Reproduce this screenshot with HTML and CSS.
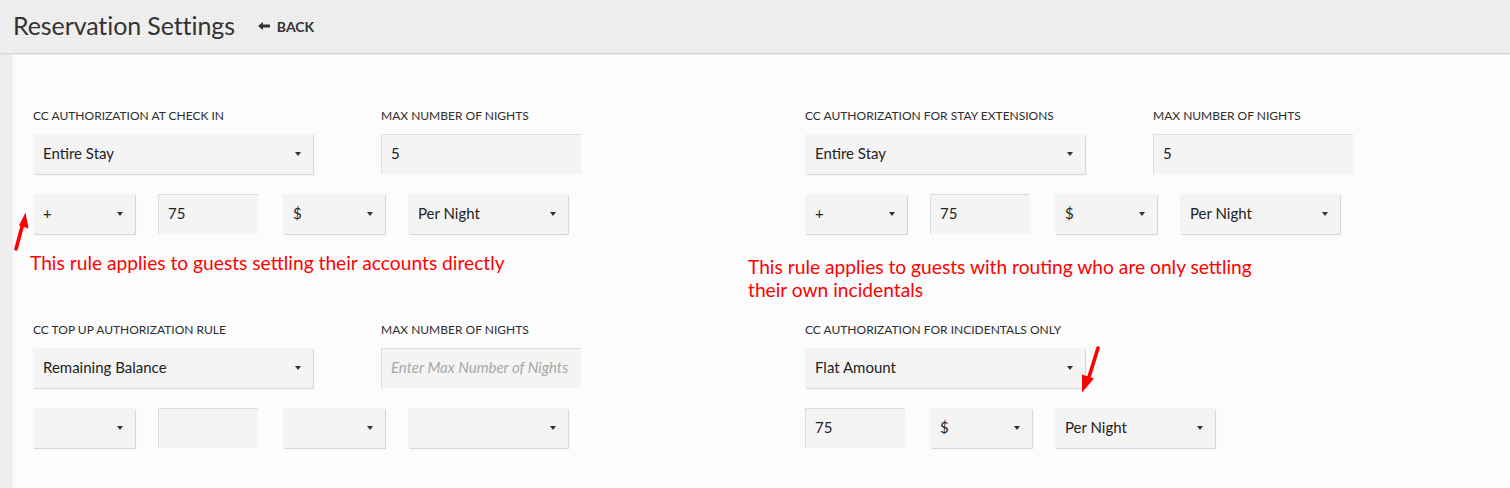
FILE: index.html
```html
<!DOCTYPE html>
<html>
<head>
<meta charset="utf-8">
<title>Reservation Settings</title>
<link rel="stylesheet" href="styles.css">
</head>
<body>
<header class="topbar">
  <h1 class="title">Reservation Settings</h1>
  <a class="back" href="#">
    <svg class="back-icon" width="12" height="10" viewBox="0 0 12 10"><path d="M0 5 L5 1 L5 3.6 L12 3.6 L12 6.4 L5 6.4 L5 9 Z" fill="#333"/></svg>
    BACK
  </a>
</header>
<div class="page">
  <div class="gutter"></div>
  <main class="panel">
    <div class="grid">
      <section class="group">
        <div class="line1">
          <div class="field main">
            <label class="lbl">CC AUTHORIZATION AT CHECK IN</label>
            <div class="ctl select w280">Entire Stay<span class="caret"></span></div>
          </div>
          <div class="field">
            <label class="lbl">MAX NUMBER OF NIGHTS</label>
            <div class="ctl input w200">5</div>
          </div>
        </div>
        <div class="line2">
          <div class="ctl select w102">+<span class="caret"></span></div>
          <div class="ctl input w100">75</div>
          <div class="ctl select w102">$<span class="caret"></span></div>
          <div class="ctl select w160">Per Night<span class="caret"></span></div>
        </div>
      </section>
      <section class="group">
        <div class="line1">
          <div class="field main">
            <label class="lbl">CC AUTHORIZATION FOR STAY EXTENSIONS</label>
            <div class="ctl select w280">Entire Stay<span class="caret"></span></div>
          </div>
          <div class="field">
            <label class="lbl">MAX NUMBER OF NIGHTS</label>
            <div class="ctl input w200">5</div>
          </div>
        </div>
        <div class="line2">
          <div class="ctl select w102">+<span class="caret"></span></div>
          <div class="ctl input w100">75</div>
          <div class="ctl select w102">$<span class="caret"></span></div>
          <div class="ctl select w160">Per Night<span class="caret"></span></div>
        </div>
      </section>

      <p class="note note-left">This rule applies to guests settling their accounts directly</p>
      <p class="note note-right">This rule applies to guests with routing who are only settling their own incidentals</p>

      <section class="group">
        <div class="line1">
          <div class="field main">
            <label class="lbl">CC TOP UP AUTHORIZATION RULE</label>
            <div class="ctl select w280">Remaining Balance<span class="caret"></span></div>
          </div>
          <div class="field">
            <label class="lbl">MAX NUMBER OF NIGHTS</label>
            <div class="ctl input w200 placeholder">Enter Max Number of Nights</div>
          </div>
        </div>
        <div class="line2">
          <div class="ctl select w102"><span class="caret"></span></div>
          <div class="ctl input w100"></div>
          <div class="ctl select w102"><span class="caret"></span></div>
          <div class="ctl select w160"><span class="caret"></span></div>
        </div>
      </section>
      <section class="group">
        <div class="line1">
          <div class="field main">
            <label class="lbl">CC AUTHORIZATION FOR INCIDENTALS ONLY</label>
            <div class="ctl select w280">Flat Amount<span class="caret"></span></div>
          </div>
        </div>
        <div class="line2">
          <div class="ctl input w100">75</div>
          <div class="ctl select w102">$<span class="caret"></span></div>
          <div class="ctl select w160">Per Night<span class="caret"></span></div>
        </div>
      </section>
    </div>
  </main>

  <svg class="anno anno-left" width="20" height="42" viewBox="0 0 20 42">
    <path d="M4 38 L10.5 14" stroke="#f00" stroke-width="3.6" stroke-linecap="round" fill="none"/>
    <path d="M13.5 1.5 L16.5 17.5 L7 14.5 Z" fill="#f00"/>
  </svg>
  <svg class="anno anno-right" width="24" height="50" viewBox="0 0 24 50">
    <path d="M19 3 L10 32" stroke="#f00" stroke-width="3.6" stroke-linecap="round" fill="none"/>
    <path d="M3 47.5 L3 29.5 L15 33.5 Z" fill="#f00"/>
  </svg>
</div>
</body>
</html>
```

FILE: styles.css
```css
html, body {
  margin: 0;
  padding: 0;
}
body {
  width: 1510px;
  height: 488px;
  overflow: hidden;
  font-family: "Lato", "Liberation Sans", sans-serif;
  color: #333;
  background-color: #efefef;
  background-image: radial-gradient(#e4e4e4 0.7px, transparent 0.9px);
  background-size: 3px 3px;
}
.topbar {
  height: 54px;
  border-bottom: 1px solid #d6d6d6;
  box-shadow: 0 1px 0 #e8e8e8;
  display: flex;
  align-items: center;
  padding-left: 13px;
  padding-bottom: 3px;
  box-sizing: border-box;
}
.title {
  margin: 0;
  font-weight: 400;
  font-size: 25px;
  color: #333;
  letter-spacing: -0.1px;
}
.back {
  display: flex;
  align-items: center;
  gap: 7px;
  margin-left: 23px;
  margin-top: 2px;
  font-size: 14px;
  font-weight: 700;
  color: #333;
  text-decoration: none;
}
.page {
  position: relative;
  display: flex;
  height: 433px;
  margin-top: 1px;
}
.gutter {
  width: 13px;
  flex: none;
}
.panel {
  flex: 1;
  background: #fcfcfc;
  padding: 53px 20px 0 20px;
}
.grid {
  display: grid;
  grid-template-columns: 772px 1fr;
  grid-template-rows: auto 88px auto;
}
.field {
  display: flex;
  flex-direction: column;
}
.lbl {
  display: block;
  font-size: 12px;
  line-height: 16px;
  height: 16px;
  margin-bottom: 10px;
  color: #2e2e2e;
  text-transform: uppercase;
  white-space: nowrap;
}
.line1 {
  display: flex;
  gap: 68px;
}
.line2 {
  display: grid;
  grid-template-columns: repeat(4, 125px);
  margin-top: 20px;
}
.ctl {
  position: relative;
  height: 40px;
  box-sizing: border-box;
  background: #f4f4f4;
  font-size: 15px;
  line-height: 39px;
  color: #222;
  padding-left: 10px;
  white-space: nowrap;
  overflow: hidden;
}
.select {
  box-shadow: 1px 1px 1px #d2d2d2;
  border-radius: 1px;
}
.input {
  box-shadow: inset 1px 1px 0 #dedede;
}
.placeholder {
  color: #a8a8a8;
  font-style: italic;
}
.w280 { width: 280px; }
.w200 { width: 200px; }
.w160 { width: 160px; }
.w102 { width: 102px; }
.w100 { width: 100px; }
.caret {
  position: absolute;
  right: 12px;
  top: 18px;
  width: 0;
  height: 0;
  border-left: 3.5px solid transparent;
  border-right: 3.5px solid transparent;
  border-top: 4px solid #333;
}
.note {
  margin: 0;
  font-family: "Lato", "Liberation Sans", sans-serif;
  font-size: 19.2px;
  line-height: 23px;
  color: #f00;
}
.note-left {
  margin-top: 17px;
  margin-left: -3px;
}
.note-right {
  margin-top: 21px;
  margin-left: -57px;
  max-width: 515px;
}
.anno {
  position: absolute;
}
.anno-left {
  left: 12px;
  top: 156px;
}
.anno-right {
  left: 1079px;
  top: 290px;
}
```
